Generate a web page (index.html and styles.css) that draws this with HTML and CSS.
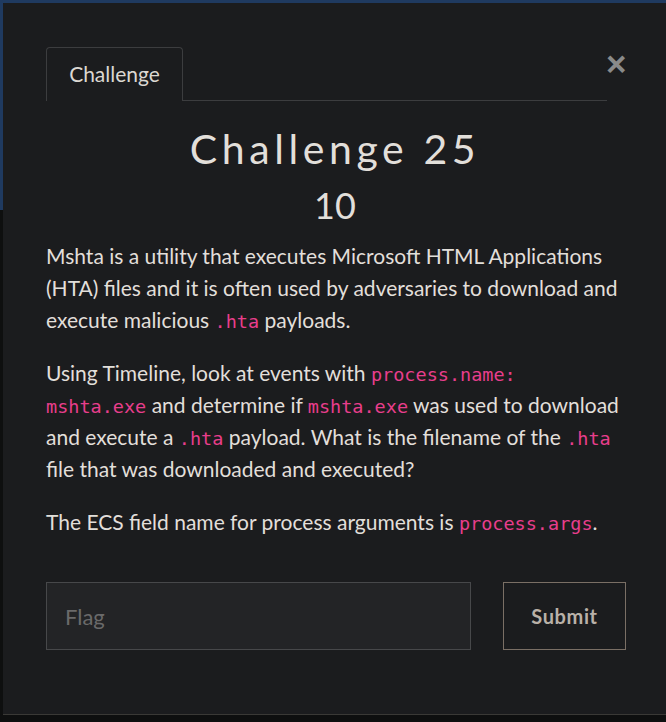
FILE: index.html
```html
<!DOCTYPE html>
<html>
<head>
<meta charset="utf-8">
<link rel="stylesheet" href="styles.css">
</head>
<body>
<div class="navbar"></div>
<div class="page"></div>
<div class="modal">
  <div class="modal-inner">
    <div class="header">
      <div class="tabs">
        <div class="tab">Challenge</div>
      </div>
      <button class="close" aria-label="Close">&times;</button>
    </div>
    <h2 class="title">Challenge 25</h2>
    <h3 class="value">10</h3>
    <div class="description">
      <p>Mshta is a utility that executes Microsoft HTML Applications (HTA) files and it is often used by adversaries to download and execute malicious <code>.hta</code> payloads.</p>
      <p>Using Timeline, look at events with <code>process.name: mshta.exe</code> and determine if <code>mshta.exe</code> was used to download and execute a <code>.hta</code> payload. What is the filename of the <code>.hta</code> file that was downloaded and executed?</p>
      <p>The ECS field name for process arguments is <code>process.args</code>.</p>
    </div>
    <form class="submit-row">
      <input class="flag" type="text" placeholder="Flag">
      <button class="submit" type="button">Submit</button>
    </form>
  </div>
</div>
</body>
</html>
```
FILE: styles.css
```css
html, body {
  margin: 0;
  padding: 0;
  height: 100%;
  overflow: hidden;
}
body {
  background: #0e0f0f;
  font-family: "Lato", "Noto Sans", sans-serif;
  color: #e2dfda;
}
.navbar {
  height: 210px;
  background: #1f3a60;
}
.modal {
  position: absolute;
  left: 3px;
  top: 3px;
  width: 700px;
  height: 712px;
  background: #1b1c1e;
  border-bottom: 1px solid #3a3936;
  box-sizing: border-box;
}
.modal-inner {
  width: 578px;
  padding: 44px 0 0 43px;
}
.header {
  display: flex;
  align-items: flex-start;
}
.tabs {
  flex: 1;
  display: flex;
  border-bottom: 1px solid #3c3d3f;
}
.tab {
  width: 137px;
  height: 54px;
  box-sizing: border-box;
  border: 1px solid #3c3d3f;
  border-bottom: none;
  border-radius: 4px 4px 0 0;
  display: flex;
  align-items: center;
  justify-content: center;
  padding-bottom: 2px;
  font-size: 21px;
  color: #dcd8d2;
  margin-bottom: -1px;
  background: #1b1c1e;
}
.close {
  background: none;
  border: none;
  padding: 0;
  margin: 5px 0 0 -1px;
  width: 18px;
  font-family: "Liberation Sans", Arial, sans-serif;
  font-size: 35px;
  font-weight: 700;
  line-height: 24px;
  color: #8a8a8a;
}
.title {
  margin: 24px 0 0;
  text-align: center;
  font-weight: 400;
  font-size: 41px;
  letter-spacing: 4.6px;
  line-height: 48px;
  color: #e2dfda;
}
.value {
  margin: 11px 0 0;
  text-align: center;
  font-weight: 400;
  font-size: 36px;
  line-height: 42px;
  color: #e2dfda;
}
.description {
  margin-top: 14px;
  font-size: 21px;
  line-height: 32px;
  color: #e2dfda;
}
.description p {
  margin: 0 0 21px;
}
code {
  font-family: "DejaVu Sans Mono", monospace;
  font-size: 18.5px;
  line-height: 20px;
  color: #e83e8c;
}
.submit-row {
  display: flex;
  gap: 32px;
  margin-top: 44px;
}
.flag {
  flex-shrink: 0;
  width: 425px;
  height: 68px;
  box-sizing: border-box;
  background: #232426;
  border: 1px solid #47484a;
  padding: 0 18px;
  font-family: "Lato", sans-serif;
  font-size: 22px;
  color: #e2dfda;
  outline: none;
}
.flag::placeholder {
  color: #6a6a6a;
}
.submit {
  flex-shrink: 0;
  width: 123px;
  height: 68px;
  box-sizing: border-box;
  background: transparent;
  border: 1px solid #7a6f65;
  font-family: "Lato", sans-serif;
  font-weight: 700;
  font-size: 20px;
  letter-spacing: 0.6px;
  color: #b9b1a8;
}
```
